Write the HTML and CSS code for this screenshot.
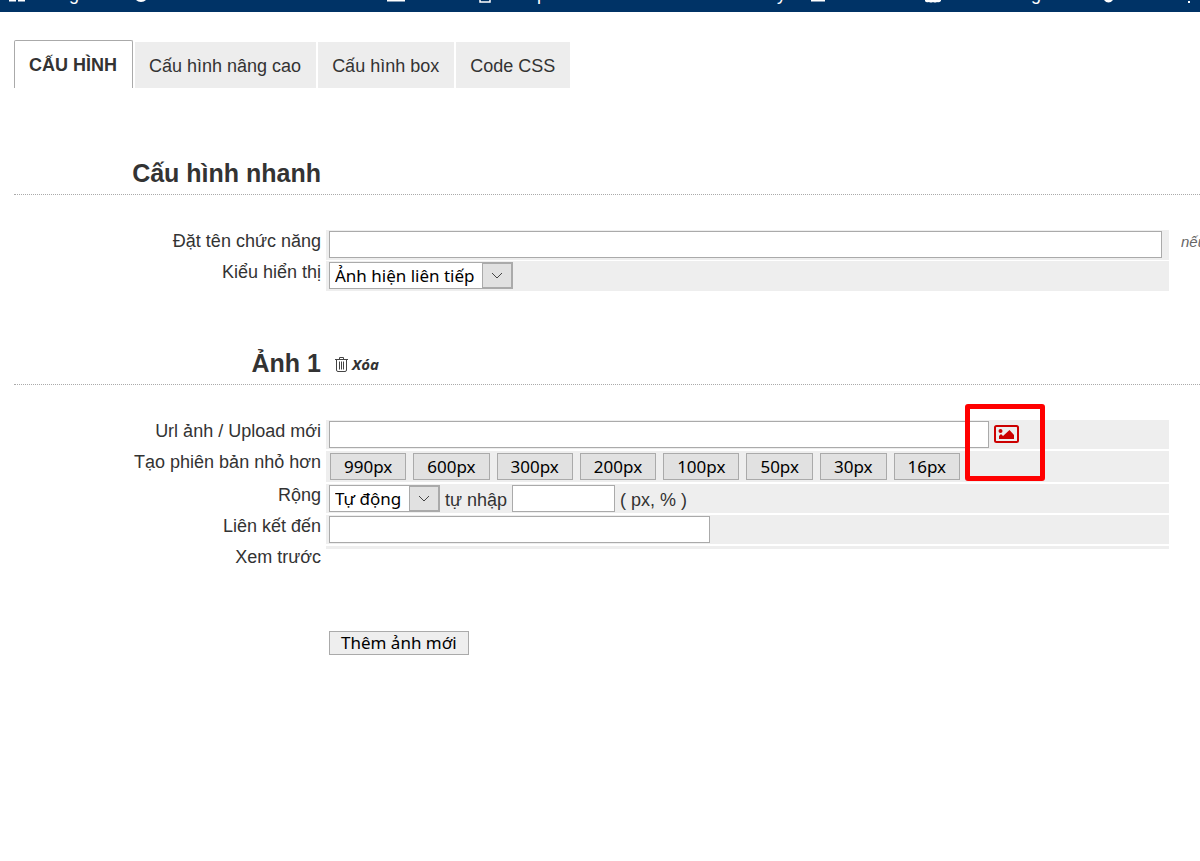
FILE: index.html
```html
<!DOCTYPE html>
<html lang="vi">
<head>
<meta charset="utf-8">
<title>Cấu hình</title>
<link rel="stylesheet" href="styles.css">
</head>
<body>
<header class="topbar">
  <svg class="topbar-art" width="1200" height="12" viewBox="0 0 1200 12" fill="#fff" aria-hidden="true">
    <path d="M9 0h7v1.500H9zM18 0h7v1.500h-7zM136 0h10q-2 2-5 2t-5-2zM387 0h18v1.500h-18zM811 0h14v1.500h-14zM925 0h16v1q-2 2-4 1-2 1-4 0-2 1-4 0-3 1-4-1zM1104 0h9q-2 2.500-4.500 2.500T1104 0zM1188 1h2v2h-2z"/>
    <path d="M480 0v2h10V0" fill="none" stroke="#fff" stroke-width="1.500"/>
    <text x="69" y="0">g</text><text x="537" y="0">p</text><text x="777" y="0">y</text><text x="1031" y="0">g</text>
  </svg>
</header>
<main class="page">
  <nav class="tabs">
    <a class="tab tab-active" href="#">CẤU HÌNH</a>
    <a class="tab" href="#">Cấu hình nâng cao</a>
    <a class="tab" href="#">Cấu hình box</a>
    <a class="tab" href="#">Code CSS</a>
  </nav>
  <form>
    <section class="section">
      <div class="section-head"><h2>Cấu hình nhanh</h2></div>
      <div class="rows rows-tight">
        <div class="row">
          <label for="name">Đặt tên chức năng</label>
          <div class="field"><input class="text-full" id="name" type="text"></div>
          <span class="hint">nếu</span>
        </div>
        <div class="row">
          <label for="display">Kiểu hiển thị</label>
          <div class="field">
            <span class="select select-wide">
              <select id="display"><option>Ảnh hiện liên tiếp</option></select>
              <span class="arrow"><svg width="12" height="7" viewBox="0 0 12 7"><path d="M1 1l5 5 5-5" fill="none" stroke="#444"/></svg></span>
            </span>
          </div>
        </div>
      </div>
    </section>
    <section class="section">
      <div class="section-head">
        <h2>Ảnh 1</h2>
        <button class="delete" type="button">
          <svg width="13" height="16" viewBox="0 0 13 16" fill="none" stroke="#444"><path d="M0 3.500h13M4.500 3V1.500h4V3M1.500 4v10q0 1.500 1.500 1.500h7q1.500 0 1.500-1.500V4M4.500 5.500v8M6.500 5.500v8M8.500 5.500v8"/></svg>
          Xóa
        </button>
      </div>
      <div class="rows">
        <div class="row">
          <label for="url">Url ảnh / Upload mới</label>
          <div class="field">
            <input class="text-url" id="url" type="text">
            <button class="upload" type="button" aria-label="Upload">
              <svg width="25" height="18" viewBox="0 0 25 18"><rect x="1" y="1" width="23" height="16" rx="1.500" fill="none" stroke="#c00" stroke-width="2"/><circle cx="6.500" cy="6" r="2" fill="#c00"/><path d="M5 14v-3l2-2 2 2 6.500-6L20 10v4z" fill="#c00"/></svg>
              <span class="highlight"></span>
            </button>
          </div>
        </div>
        <div class="row">
          <span class="label">Tạo phiên bản nhỏ hơn</span>
          <div class="field sizes">
            <button type="button">990px</button>
            <button type="button">600px</button>
            <button type="button">300px</button>
            <button type="button">200px</button>
            <button type="button">100px</button>
            <button type="button">50px</button>
            <button type="button">30px</button>
            <button type="button">16px</button>
          </div>
        </div>
        <div class="row">
          <label for="width">Rộng</label>
          <div class="field">
            <span class="select select-narrow">
              <select id="width"><option>Tự động</option></select>
              <span class="arrow"><svg width="12" height="7" viewBox="0 0 12 7"><path d="M1 1l5 5 5-5" fill="none" stroke="#444"/></svg></span>
            </span>
            <label class="inline" for="custom">tự nhập</label>
            <input class="text-small" id="custom" type="text">
            <span class="inline">( px, % )</span>
          </div>
        </div>
        <div class="row">
          <label for="link">Liên kết đến</label>
          <div class="field"><input class="text-link" id="link" type="text"></div>
        </div>
        <div class="row row-preview">
          <span class="label">Xem trước</span>
          <div class="field"></div>
        </div>
      </div>
    </section>
    <button class="add" type="button">Thêm ảnh mới</button>
  </form>
</main>
</body>
</html>
```
FILE: styles.css
```css
* { box-sizing: border-box; }
body {
  margin: 0;
  background: #fff;
  color: #333;
  font: 18px/24px "Liberation Sans", Arial, sans-serif;
  overflow-x: hidden;
}
input, select, button { font: 17px/24px "Noto Sans", sans-serif; color: #000; }
.topbar { height: 12px; background: #036; overflow: hidden; }
.topbar-art { display: block; font-size: 18px; }
.page { padding: 28px 0 0 14px; }
.tabs { display: flex; align-items: flex-end; gap: 2px; }
.tab {
  padding: 12px 15px 10px 14px;
  background: #ededed;
  color: #333;
  text-decoration: none;
}
.tab-active {
  padding-bottom: 11px;
  border: 1px solid #aaa;
  border-bottom: 0;
  border-radius: 2px 2px 0 0;
  background: #fff;
  font-weight: bold;
}
.section { padding-top: 67px; }
.section + .section { padding-top: 54px; }
.section-head {
  display: flex;
  align-items: center;
  height: 40px;
  padding-bottom: 4px;
  border-bottom: 1px dotted #aaa;
}
h2 { width: 307px; margin: 0; font-size: 25px; line-height: 32px; text-align: right; }
.delete {
  display: flex;
  align-items: center;
  gap: 4px;
  margin: 3px 0 0 14px;
  padding: 0;
  border: 0;
  background: none;
  color: #333;
  font-size: 15px;
  font-style: italic;
  font-weight: bold;
}
.rows { display: grid; gap: 2px; padding-top: 35px; }
.rows-tight { gap: 1px; }
.row {
  display: grid;
  grid-template-columns: 307px 1fr 19px;
  column-gap: 5px;
}
.row > label, .row > .label { height: 24px; margin-top: -1px; text-align: right; }
.row .field { margin-right: 7px; }
.field {
  display: flex;
  align-items: flex-start;
  min-height: 29px;
  padding: 1px 7px 0 3px;
  background: #eee;
}
.rows-tight .field { min-height: 30px; }
.hint {
  color: #666;
  font-size: 15px;
  font-style: italic;
  white-space: nowrap;
  overflow: hidden;
}
input {
  height: 27px;
  padding: 0 4px;
  border: 1px solid #aaa;
  background: #fff;
}
.text-full { width: 100%; }
.text-url { width: 660px; max-width: 80%; }
.text-small { width: 103px; }
.text-link { width: 381px; }
.select { position: relative; display: block; height: 27px; }
.select-wide { width: 184px; }
.select-narrow { width: 111px; }
.select select {
  width: 100%;
  height: 27px;
  padding: 0 31px 0 5px;
  appearance: none;
  border: 1px solid #aaa;
  border-radius: 0;
  background: #fff;
}
.arrow {
  position: absolute;
  top: 0;
  right: 0;
  display: grid;
  place-items: center;
  width: 31px;
  height: 27px;
  border: 2px solid #aaa;
  border-left-width: 1px;
  background: #e1e1e1;
  pointer-events: none;
}
.inline { margin: 3px 5px 0; }
.sizes { gap: 7px; min-height: 31px; padding: 2px 4px; }
.sizes button {
  height: 27px;
  padding: 0 13px;
  border: 1px solid #aaa;
  background: #e1e1e1;
}
.upload {
  position: relative;
  margin: 4px 0 0 5px;
  padding: 0;
  border: 0;
  background: none;
}
.upload svg { display: block; }
.highlight {
  position: absolute;
  top: -21px;
  left: -29px;
  width: 80px;
  height: 77px;
  border: 5px solid #f00;
  border-radius: 3px;
  pointer-events: none;
}
.row-preview .field { min-height: 0; height: 3px; padding: 0; }
.add {
  height: 24px;
  margin: 62px 0 0 315px;
  padding: 0 11px;
  border: 1px solid #aaa;
  background: #eee;
  line-height: 20px;
}
```
